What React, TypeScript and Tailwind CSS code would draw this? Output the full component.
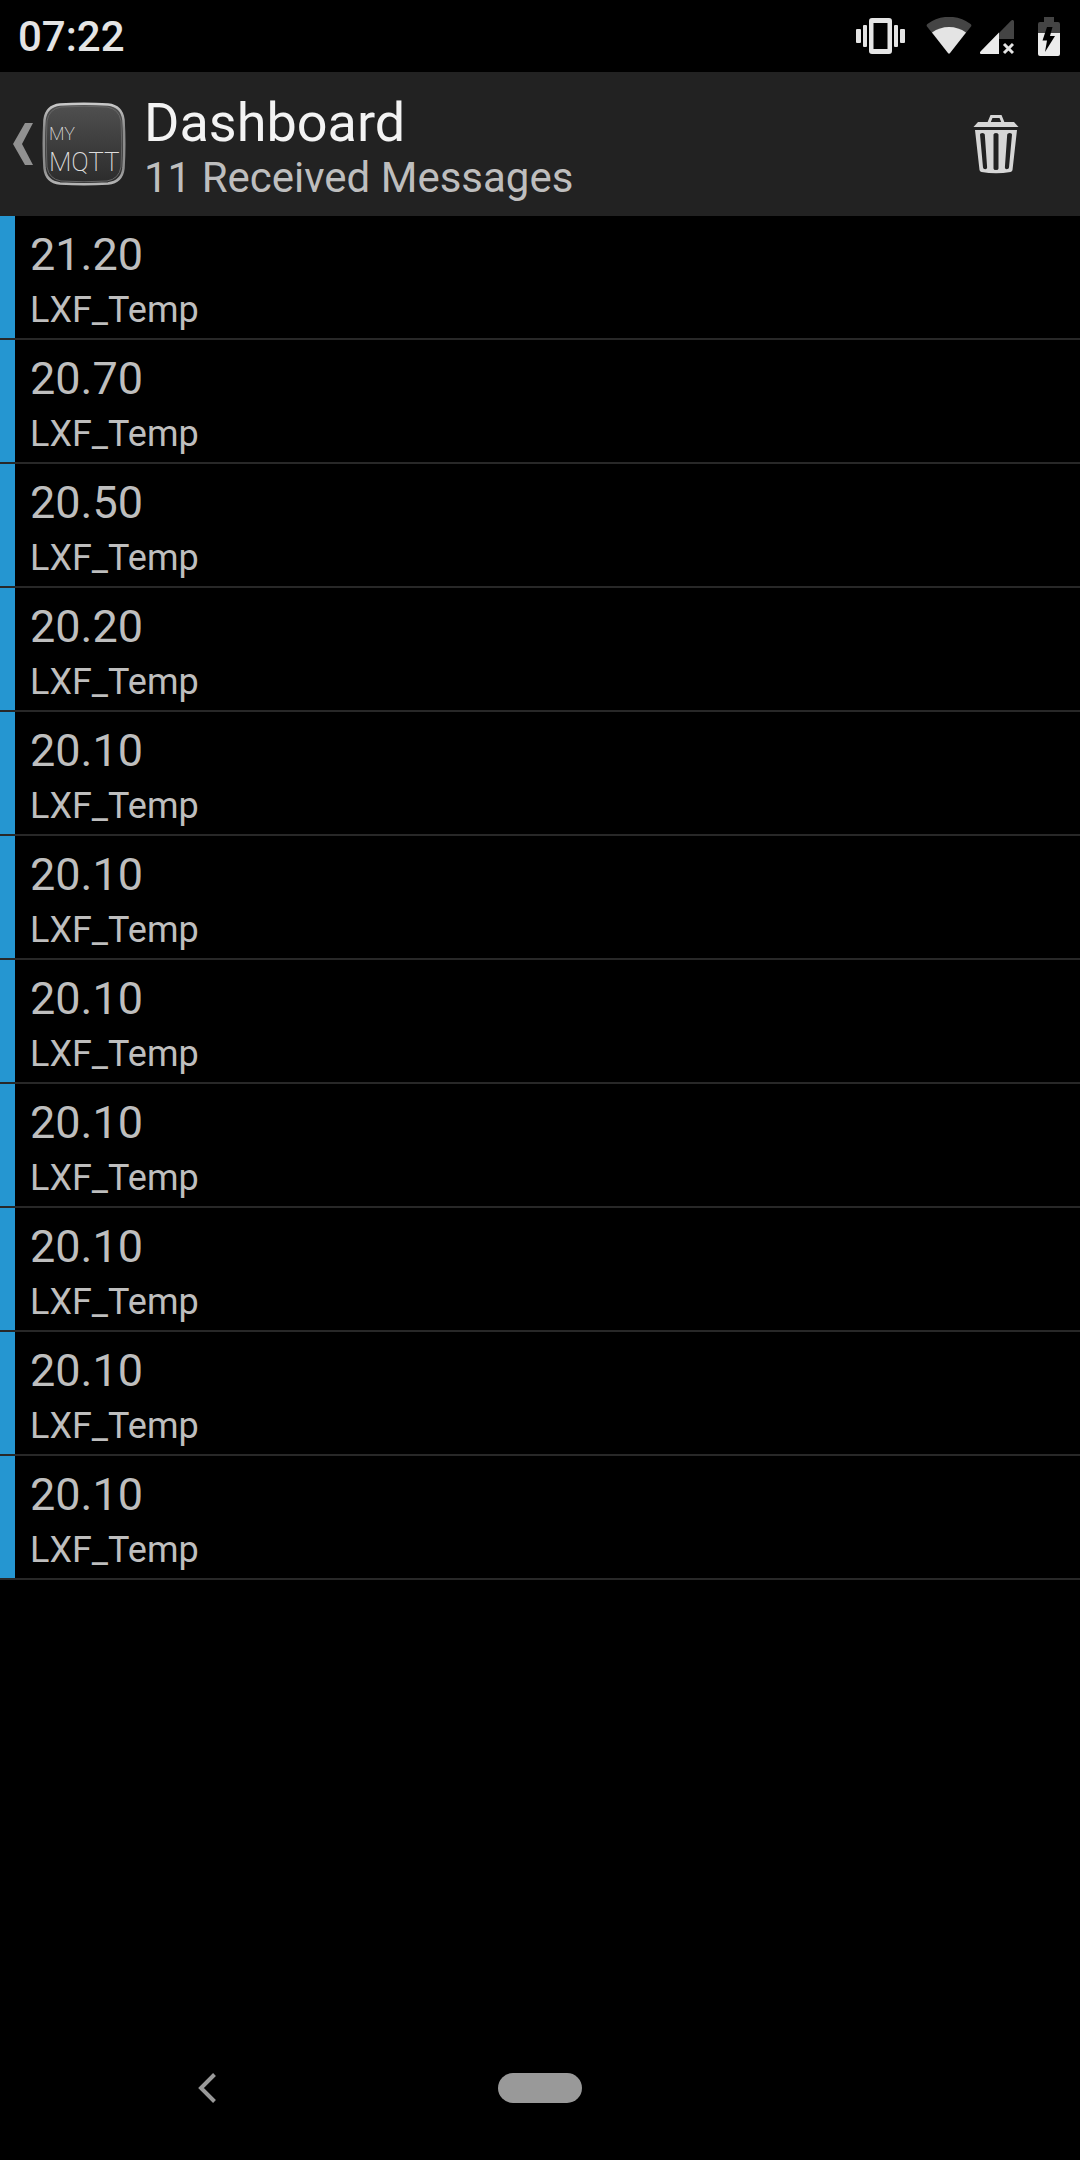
const messages = [
  '21.20',
  '20.70',
  '20.50',
  '20.20',
  '20.10',
  '20.10',
  '20.10',
  '20.10',
  '20.10',
  '20.10',
  '20.10',
].map((value, id) => ({ id, value, topic: 'LXF_Temp' }));

function VibrateIcon() {
  return (
    <svg width="50" height="38" viewBox="0 0 50 38" fill="#e4e4e4" aria-hidden="true">
      <rect x="0" y="12" width="5" height="14" rx="1" />
      <rect x="7" y="8" width="4" height="22" rx="1" />
      <path
        fillRule="evenodd"
        d="M16 1h17a3 3 0 0 1 3 3v30a3 3 0 0 1-3 3H16a3 3 0 0 1-3-3V4a3 3 0 0 1 3-3Zm1.500 5v26h14V6Z"
      />
      <rect x="38" y="8" width="4" height="22" rx="1" />
      <rect x="44" y="12" width="5" height="14" rx="1" />
    </svg>
  );
}

function WifiIcon() {
  return (
    <svg width="46" height="38" viewBox="0 0 46 38" aria-hidden="true">
      <path
        fill="#444"
        d="M1.200 9.800A2 2 0 0 1 1.400 7 36 36 0 0 1 44.600 7a2 2 0 0 1 .2 2.800L24 36a1.300 1.300 0 0 1-2 0Z"
      />
      <path fill="#e4e4e4" d="M6 15.500a29 29 0 0 1 34 0L24 36a1.300 1.300 0 0 1-2 0Z" />
    </svg>
  );
}

function SignalIcon() {
  return (
    <svg width="34" height="36" viewBox="0 0 34 36" aria-hidden="true">
      <path fill="#444" d="M19 14 31 1.700c1.200-1.200 3-.7 3 1.300v17H19Z" />
      <path fill="#ebebeb" d="M19 13.500V35H1c-1.200 0-1.500-1.500-.5-2.500Z" />
      <path d="m24 25 9 9m0-9-9 9" stroke="#e4e4e4" strokeWidth="3" fill="none" />
    </svg>
  );
}

function BatteryIcon() {
  return (
    <svg width="22" height="40" viewBox="0 0 22 40" aria-hidden="true">
      <path fill="#444" d="M6 1h10v5h4a2 2 0 0 1 2 2v9H0V8a2 2 0 0 1 2-2h4Z" />
      <path fill="#ebebeb" d="M0 17h22v21a2 2 0 0 1-2 2H2a2 2 0 0 1-2-2Z" />
      <path fill="#000" d="M9 11h5.500l-2.500 9h5L7 36l2-11.500H4.500Z" />
    </svg>
  );
}

function AppLogo() {
  return (
    <svg width="84" height="84" viewBox="0 0 84 84" role="img" aria-label="MyMQTT">
      <defs>
        <linearGradient id="face" x1="0" y1="0" x2="0" y2="1">
          <stop offset="0" stopColor="#505050" />
          <stop offset="1" stopColor="#2b2b2b" />
        </linearGradient>
        <linearGradient id="rim" x1="0" y1="0" x2="0" y2="1">
          <stop offset="0" stopColor="#c9c9c9" />
          <stop offset="0.300" stopColor="#8c8c8c" />
          <stop offset="0.800" stopColor="#8c8c8c" />
          <stop offset="1" stopColor="#b5b5b5" />
        </linearGradient>
      </defs>
      <path
        d="M18 2.500Q42 1 66 2.500 80 4 81.500 18 83 42 81.500 66 80 80 66 81.500 42 83 18 81.500 4 80 2.500 66 1 42 2.500 18 4 4 18 2.500Z"
        fill="url(#face)"
        stroke="url(#rim)"
        strokeWidth="2.500"
      />
      <path
        d="M19 5Q42 3.500 65 5 77 7 79 19 80.500 42 79 65 77 77 65 79 42 80.500 19 79 7 77 5 65 3.500 42 5 19 7 7 19 5Z"
        fill="none"
        stroke="#666"
        strokeWidth="1"
      />
      <g fill="#dedede" fontFamily="Roboto, sans-serif" fontWeight="200">
        <text x="7" y="38" fontSize="18">MY</text>
        <text x="7" y="69" fontSize="26">MQTT</text>
      </g>
    </svg>
  );
}

function TrashIcon() {
  return (
    <svg width="46" height="60" viewBox="0 0 46 60" aria-hidden="true">
      <path d="M16 8.500 18.500 2.500h9L30 8.500" fill="none" stroke="#d6d6d6" strokeWidth="3" />
      <path d="M5 8h36l4.500 5H.5Z" fill="#d6d6d6" />
      <path
        fillRule="evenodd"
        fill="#d6d6d6"
        d="M2 16h42l-4.500 40q-.2 1.600-2 2-14.500 2.500-29 0-1.800-.4-2-2ZM7 20.500l3 33q.2 1.700 2.300 1.700 2 0 1.800-2L11.800 20.500q-.2-1.500-2.500-1.500T7 20.500Zm13.500 0v34q0 1.500 2.500 1.500t2.500-1.500v-34Q25.500 19 23 19t-2.500 1.500Zm13.700 0-2.300 32.700q-.2 2 1.800 2 2.100 0 2.300-1.700l3-33q0-1.500-2.300-1.500t-2.500 1.500Z"
      />
    </svg>
  );
}

function StatusBar() {
  return (
    <div className="flex h-[72px] items-center justify-between bg-black pr-5 pl-[18px]">
      <time className="pt-0.5 text-[42px] leading-[48px] font-medium text-[#e4e4e4]">07:22</time>
      <div className="flex items-center">
        <VibrateIcon />
        <div className="ml-5 flex items-center">
          <WifiIcon />
        </div>
        <div className="ml-2 flex items-center pt-0.5">
          <SignalIcon />
        </div>
        <div className="ml-6 flex items-center">
          <BatteryIcon />
        </div>
      </div>
    </div>
  );
}

function ActionBar() {
  return (
    <header className="flex h-36 items-center justify-between bg-[#222222] pr-[61px] pl-[13px]">
      <div className="flex items-center">
        <button type="button" aria-label="Navigate up" className="flex items-center gap-[9px]">
          <svg width="20" height="42" viewBox="0 0 20 42" fill="#919191" aria-hidden="true">
            <path d="M12 0h8L9 21l11 21h-8L0 21Z" />
          </svg>
          <AppLogo />
        </button>
        <div className="ml-[18px] pt-[3px]">
          <h1 className="text-[54px] leading-[64px] text-[#f3f3f3]">Dashboard</h1>
          <p className="text-[42px] leading-[46px] text-[#bebebe]">{messages.length} Received Messages</p>
        </div>
      </div>
      <button type="button" aria-label="Delete messages">
        <TrashIcon />
      </button>
    </header>
  );
}

function NavigationBar() {
  return (
    <nav className="grid h-36 grid-cols-3 place-items-center bg-black px-10">
      <button type="button" aria-label="Back">
        <svg width="18" height="30" viewBox="0 0 18 30" aria-hidden="true">
          <path d="M16.500 1.500 3 15l13.500 13.500" fill="none" stroke="#999" strokeWidth="4" />
        </svg>
      </button>
      <button type="button" aria-label="Home" className="h-[30px] w-[84px] rounded-full bg-[#999999]" />
    </nav>
  );
}

export default function App() {
  return (
    <div className="flex min-h-screen flex-col bg-black font-['Roboto',sans-serif]">
      <StatusBar />
      <ActionBar />
      <main className="flex-1">
        <ul>
          {messages.map((message) => (
            <li key={message.id} className="flex border-b-2 border-[#282828] text-[#bebebe]">
              <div className="w-[15px] bg-[#2596d1]" />
              <div className="flex flex-col gap-1.5 pt-3 pb-1.5 pl-[15px]">
                <p className="text-[45px] leading-[54px]">{message.value}</p>
                <p className="text-[36px] leading-[44px]">{message.topic}</p>
              </div>
            </li>
          ))}
        </ul>
      </main>
      <NavigationBar />
    </div>
  );
}
